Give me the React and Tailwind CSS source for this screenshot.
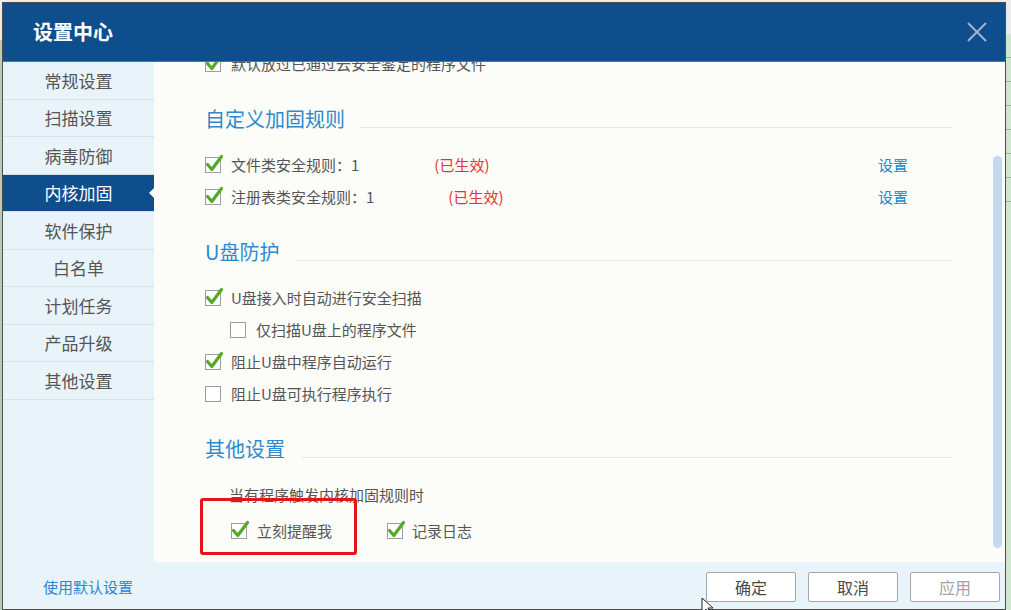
import React from "react";

const navItems = ["常规设置", "扫描设置", "病毒防御", "内核加固", "软件保护", "白名单", "计划任务", "产品升级", "其他设置"];

const Check = ({ checked }) => (
  <svg width="16" height="16" viewBox="0 0 16 16" overflow="visible" className="shrink-0">
    <rect x="0.5" y="0.5" width="15" height="15" fill="#ffffff" stroke="#9d9d9d" />
    {checked && (
      <path d="M2.5 7.5 L6.8 12.5 L16.5 -0.5" fill="none" stroke="#56a82a" strokeWidth="3.2" strokeLinecap="round" strokeLinejoin="round" />
    )}
  </svg>
);

const Row = ({ checked, indent, children }) => (
  <div className={indent ? "flex h-8 items-center pl-[25px]" : "flex h-8 items-center"}>
    <Check checked={checked} />
    <span className="ml-[10px] whitespace-nowrap">{children}</span>
  </div>
);

const Heading = ({ title }) => (
  <div className="mt-[19px] mb-[10px] flex h-10 items-center">
    <span className="text-[20px] text-[#2d8ad0]">{title}</span>
    <div className="ml-4 mt-4 h-px flex-1 bg-[#dce9f5]" />
  </div>
);

const App = () => {
  const active = "内核加固";

  return (
    <div
      className="relative flex h-[610px] w-[1011px] overflow-hidden bg-[#ececec]"
      style={{ fontFamily: '"Noto Sans CJK SC", "Noto Sans", sans-serif' }}
    >
      <div className="mt-[40px] w-[2px] bg-[#b9ccb9]" />

      <div className="mt-[2px] flex h-[608px] w-[1004px] flex-col border border-[#4d4d4d] bg-[#e8f3fa]">
        {/* title bar */}
        <div className="flex h-[58px] items-center justify-between bg-[#0f4e8c] pl-[30px] pr-[18px]">
          <span className="text-[20px] font-bold text-white">设置中心</span>
          <svg width="20" height="20" viewBox="0 0 20 20">
            <path d="M1 1 L19 19 M19 1 L1 19" stroke="#9fb4cf" strokeWidth="2" />
          </svg>
        </div>
        <div className="h-px bg-[#4677ab]" />

        <div className="flex h-[500px]">
          {/* sidebar */}
          <div className="w-[151px] bg-[#e8f3fa]">
            {navItems.map((item) => (
              <div
                key={item}
                className={
                  item === active
                    ? "relative flex h-[37.5px] items-center justify-center border-b border-[#d3e2ec] bg-[#0f4e8c] text-[17px] text-white"
                    : "relative flex h-[37.5px] items-center justify-center border-b border-[#d3e2ec] text-[17px] text-[#555555]"
                }
              >
                {item}
                {item === active && (
                  <span className="absolute right-0 top-1/2 -translate-y-1/2 border-y-[5px] border-r-[5px] border-y-transparent border-r-[#fcfdf8]" />
                )}
              </div>
            ))}
          </div>

          {/* content */}
          <div className="flex flex-1 overflow-hidden bg-[#fcfdf8]">
            <div className="flex-1 pl-[51px] pr-[40px] text-[15px] text-[#555555]">
              <div className="-mt-[14px]">
                <Row checked>默认放过已通过云安全鉴定的程序文件</Row>
              </div>

              <Heading title="自定义加固规则" />
              <div className="flex h-8 items-center">
                <Check checked />
                <span className="ml-[10px]">文件类安全规则：1</span>
                <span className="ml-[75px] text-[#e53232]">(已生效)</span>
                <span className="ml-auto mr-[45px] text-[#2385d0]">设置</span>
              </div>
              <div className="flex h-8 items-center">
                <Check checked />
                <span className="ml-[10px]">注册表类安全规则：1</span>
                <span className="ml-[74px] text-[#e53232]">(已生效)</span>
                <span className="ml-auto mr-[45px] text-[#2385d0]">设置</span>
              </div>

              <Heading title="U盘防护" />
              <Row checked>U盘接入时自动进行安全扫描</Row>
              <Row indent>仅扫描U盘上的程序文件</Row>
              <Row checked>阻止U盘中程序自动运行</Row>
              <Row>阻止U盘可执行程序执行</Row>

              <Heading title="其他设置" />
              <div className="flex h-8 items-center pl-6">当有程序触发内核加固规则时</div>
              <div className="relative mt-1 flex h-8 items-center pl-[26px]">
                <Check checked />
                <span className="ml-[10px]">立刻提醒我</span>
                <span className="ml-[55px] flex items-center">
                  <Check checked />
                  <span className="ml-[9px]">记录日志</span>
                </span>
                <div className="absolute -top-[17px] -left-[5px] h-[57px] w-[157px] rounded-[3px] border-[3px] border-[#e8131b]" />
              </div>
            </div>

            {/* scrollbar */}
            <div className="mr-[3px] w-[9px] pt-[94px] pb-[14px]">
              <div className="h-full rounded-full bg-[#c4d8ef]" />
            </div>
          </div>
        </div>

        {/* footer */}
        <div className="flex h-[46px] items-center bg-[#e8f3fa] pt-[4px] pr-[5px]">
          <span className="ml-[40px] text-[15px] text-[#2c86cf]">使用默认设置</span>
          <div className="ml-auto flex gap-3">
            <button className="h-[30px] w-[90px] rounded-[2px] border border-[#a6a6a6] bg-white text-[16px] text-[#4a4a4a]">确定</button>
            <button className="h-[30px] w-[90px] rounded-[2px] border border-[#a6a6a6] bg-white text-[16px] text-[#4a4a4a]">取消</button>
            <button className="h-[30px] w-[90px] rounded-[2px] border border-[#a6a6a6] bg-white text-[16px] text-[#a3a3a3]">应用</button>
          </div>
        </div>
      </div>

      <div className="flex w-[5px] flex-col">
        <div className="h-[34px] bg-[#ececec]" />
        <div className="flex-1 bg-[#cfe6cf]">
          {[0, 1, 2, 3, 4, 5, 6].map((i) => (
            <div key={i} className="h-[24px] border-b border-[#9bb59b]" />
          ))}
        </div>
      </div>

      {/* mouse pointer */}
      <svg className="absolute left-[701px] top-[597px]" width="14" height="20" viewBox="0 0 14 20">
        <path d="M1 1 L1 16 L5 12 L8 19 L10 18 L7 11 L12 11 Z" fill="#ffffff" stroke="#222222" strokeWidth="1" />
      </svg>
    </div>
  );
};

export default App;
